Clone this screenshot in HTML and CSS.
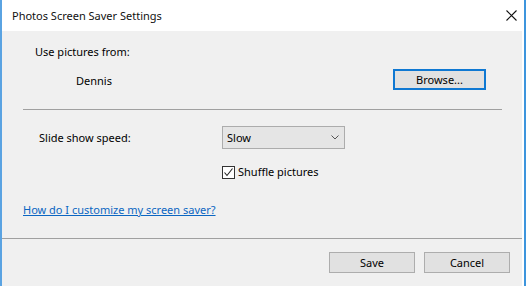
FILE: index.html
```html
<!DOCTYPE html>
<html lang="en">
<head>
  <meta charset="UTF-8">
  <title>Photos Screen Saver Settings</title>
  <link rel="stylesheet" href="styles.css">
</head>
<body>
  <div class="window">
    <div class="titlebar">
      <span class="title">Photos Screen Saver Settings</span>
      <svg class="close" width="11" height="11" viewBox="0 0 11 11">
        <path d="M0.5 0.5 L10.5 10.5 M10.5 0.5 L0.5 10.5" stroke="#111" stroke-width="1.1" fill="none"/>
      </svg>
    </div>
    <div class="content">
      <div class="main">
        <div class="from-label">Use pictures from:</div>
        <div class="from-row">
          <span class="folder">Dennis</span>
          <button class="btn btn-default">Browse...</button>
        </div>
        <div class="separator"></div>
        <div class="speed-row">
          <span class="speed-label">Slide show speed:</span>
          <div class="select">
            <span>Slow</span>
            <svg width="8" height="5" viewBox="0 0 8 5">
              <path d="M0.5 0.5 L4 4 L7.5 0.5" stroke="#555" stroke-width="1" fill="none"/>
            </svg>
          </div>
        </div>
        <label class="check-row">
          <span class="checkbox">
            <svg width="11" height="11" viewBox="0 0 11 11">
              <path d="M1.5 5.5 L4 8.5 L9.5 1.5" stroke="#222" stroke-width="1.1" fill="none"/>
            </svg>
          </span>
          <span>Shuffle pictures</span>
        </label>
        <a class="help-link" href="#">How do I customize my screen saver?</a>
      </div>
      <div class="footer">
        <button class="btn">Save</button>
        <button class="btn">Cancel</button>
      </div>
    </div>
  </div>
</body>
</html>
```

FILE: styles.css
```css
* {
  box-sizing: border-box;
}
html, body {
  margin: 0;
  padding: 0;
  background: #fff;
}
body {
  font-family: "Noto Sans", "Open Sans", sans-serif;
  font-size: 11px;
  color: #000;
}
.window {
  width: 526px;
  height: 286px;
  display: flex;
  flex-direction: column;
  background: #fff;
  border-left: 2px solid #5aa3e2;
  border-right: 2px solid #3d95dd;
}
.titlebar {
  height: 31px;
  display: flex;
  align-items: center;
  justify-content: space-between;
  padding: 0 7px 0 10px;
}
.title {
  color: #111;
  margin-top: -1px;
}
.close {
  margin-top: -1px;
}
.content {
  flex: 1;
  display: flex;
  flex-direction: column;
  background: #f0f0f0;
  margin-right: 2px;
}
.main {
  display: flex;
  flex-direction: column;
  align-items: flex-start;
  padding-top: 13px;
}
.from-label {
  line-height: 16px;
  padding-left: 33px;
}
.from-row {
  align-self: stretch;
  display: flex;
  align-items: center;
  margin-top: 9px;
  padding-left: 74px;
  padding-right: 36px;
}
.folder {
  margin-top: 2px;
}
.btn {
  font-family: inherit;
  font-size: 11px;
  color: #000;
  width: 86px;
  height: 21px;
  padding: 0;
  background: #e1e1e1;
  border: 1px solid #adadad;
  border-radius: 0;
}
.btn-default {
  width: 93px;
  margin-left: auto;
  border: 2px solid #0f78d2;
}
.separator {
  align-self: stretch;
  height: 1px;
  background: #a0a0a0;
  margin: 19px 20px 0 21px;
}
.speed-row {
  display: flex;
  align-items: center;
  margin-top: 16px;
  padding-left: 37px;
}
.speed-label {
  width: 183px;
  margin-top: -1px;
}
.select {
  width: 123px;
  height: 23px;
  display: flex;
  align-items: center;
  justify-content: space-between;
  padding: 0 5px 0 4px;
  background: #e5e5e5;
  border: 1px solid #acacac;
}
.check-row {
  display: flex;
  align-items: center;
  gap: 3px;
  margin-top: 15px;
  padding-left: 220px;
  line-height: 16px;
}
.checkbox {
  width: 13px;
  height: 13px;
  display: flex;
  align-items: center;
  justify-content: center;
  background: #fff;
  border: 1px solid #333;
}
.help-link {
  margin-top: 22px;
  margin-left: 21px;
  line-height: 16px;
  color: #0b66c2;
  text-decoration: underline;
}
.footer {
  margin-top: auto;
  height: 48px;
  display: flex;
  justify-content: flex-end;
  gap: 9px;
  padding: 13px 12px 0 0;
  border-top: 1px solid #a0a0a0;
}
```
